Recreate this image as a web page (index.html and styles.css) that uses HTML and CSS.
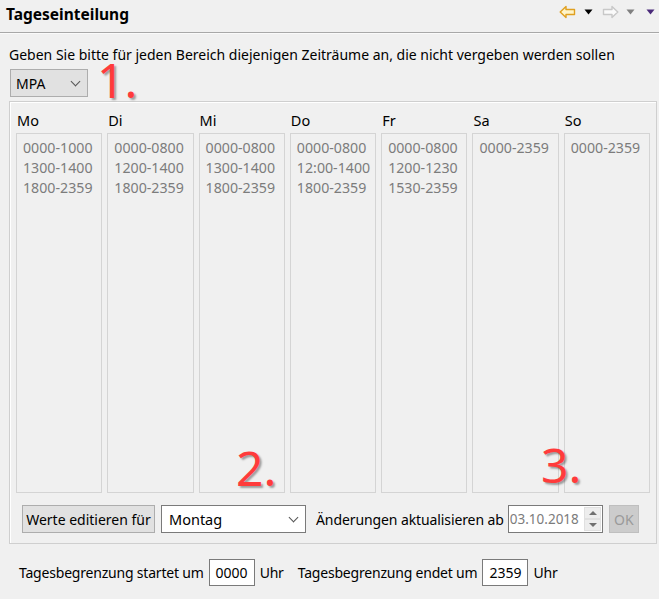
FILE: index.html
```html
<!DOCTYPE html>
<html>
<head>
<meta charset="utf-8">
<link rel="stylesheet" href="styles.css">
</head>
<body>
<div class="header">
  <div class="title">Tageseinteilung</div>
  <div class="toolbar">
    <svg class="back" width="17" height="14" viewBox="0 0 17 14"><path d="M1.2 7 L7 1.5 L7 4.5 L15.5 4.5 L15.5 9.5 L7 9.5 L7 12.5 Z" fill="#fff4c8" stroke="#e0a020" stroke-width="1.4" stroke-linejoin="round"/></svg>
    <svg class="tri t1" width="9" height="6" viewBox="0 0 9 6"><path d="M0.5 0.5 L8.5 0.5 L4.5 5.5 Z" fill="#000"/></svg>
    <svg class="fwd" width="17" height="14" viewBox="0 0 17 14"><path d="M15.8 7 L10 1.5 L10 4.5 L1.5 4.5 L1.5 9.5 L10 9.5 L10 12.5 Z" fill="#fafafa" stroke="#c8c8c8" stroke-width="1.4" stroke-linejoin="round"/></svg>
    <svg class="tri t2" width="9" height="6" viewBox="0 0 9 6"><path d="M0.5 0.5 L8.5 0.5 L4.5 5.5 Z" fill="#808080"/></svg>
    <svg class="tri t3" width="9" height="6" viewBox="0 0 9 6"><path d="M0.5 0.5 L8.5 0.5 L4.5 5.5 Z" fill="#4a2a7a"/></svg>
  </div>
</div>
<div class="content">
  <div class="intro">Geben Sie bitte für jeden Bereich diejenigen Zeiträume an, die nicht vergeben werden sollen</div>
  <div class="combo-row">
    <div class="combo gray">MPA<span class="chev"></span></div>
  </div>
  <div class="group">
    <div class="days">
      <div class="day"><div class="label">Mo</div><div class="list"><div>0000-1000</div><div>1300-1400</div><div>1800-2359</div></div></div>
      <div class="day"><div class="label">Di</div><div class="list"><div>0000-0800</div><div>1200-1400</div><div>1800-2359</div></div></div>
      <div class="day"><div class="label">Mi</div><div class="list"><div>0000-0800</div><div>1300-1400</div><div>1800-2359</div></div></div>
      <div class="day"><div class="label">Do</div><div class="list"><div>0000-0800</div><div>12:00-1400</div><div>1800-2359</div></div></div>
      <div class="day"><div class="label">Fr</div><div class="list"><div>0000-0800</div><div>1200-1230</div><div>1530-2359</div></div></div>
      <div class="day"><div class="label">Sa</div><div class="list"><div>0000-2359</div></div></div>
      <div class="day"><div class="label">So</div><div class="list"><div>0000-2359</div></div></div>
    </div>
    <div class="edit-row">
      <div class="btn">Werte editieren für</div>
      <div class="combo white">Montag<span class="chev"></span></div>
      <div class="lbl">Änderungen aktualisieren ab</div>
      <div class="date"><span class="dval">03.10.2018</span><div class="spin"><div class="sp up"></div><div class="sp down"></div></div></div>
      <div class="ok">OK</div>
    </div>
  </div>
  <div class="limits">
    <span class="lbl">Tagesbegrenzung startet um</span>
    <span class="field">0000</span>
    <span class="lbl uhr">Uhr</span>
    <span class="lbl">Tagesbegrenzung endet um</span>
    <span class="field">2359</span>
    <span class="lbl">Uhr</span>
  </div>
</div>
<div class="mark m1">1.</div>
<div class="mark m2">2.</div>
<div class="mark m3">3.</div>
</body>
</html>
```
FILE: styles.css
```css
html, body {
  margin: 0;
  padding: 0;
  background: #f0f0f0;
  width: 659px;
  height: 599px;
  overflow: hidden;
  font-family: "Noto Sans", "Open Sans", sans-serif;
  font-size: 14px;
  color: #000;
}
body { position: relative; }

.header {
  height: 32px;
  border-bottom: 1px solid #a8a8a8;
  display: flex;
  align-items: center;
  justify-content: space-between;
  padding: 0 4px 0 6px;
  box-shadow: 0 1px 0 #fafafa;
}
.title {
  font-weight: bold;
  font-size: 15.5px;
  margin-top: -4px;
}
.toolbar {
  display: flex;
  align-items: center;
  margin-top: -9px;
}
.toolbar .t1 { margin-left: 8px; }
.toolbar .fwd { margin-left: 9px; }
.toolbar .t2 { margin-left: 7px; }
.toolbar .t3 { margin-left: 11px; }

.content {
  padding: 0 2px 0 9px;
}
.intro {
  margin-top: 12px;
  line-height: 20px;
  height: 20px;
}
.combo-row { margin-top: 4px; }

.combo {
  box-sizing: border-box;
  height: 28px;
  display: flex;
  align-items: center;
  justify-content: space-between;
  padding: 0 8px 0 5px;
  position: relative;
}
.combo.gray {
  width: 78px;
  margin-left: 1px;
  background: #e1e1e1;
  border: 1px solid #adadad;
}
.combo.white {
  width: 145px;
  height: 28px;
  background: #fff;
  border: 1px solid #7a7a7a;
  padding-left: 7px;
  font-size: 14.5px;
}
.chev {
  width: 6px;
  height: 6px;
  border-right: 1px solid #555;
  border-bottom: 1px solid #555;
  transform: rotate(45deg);
  margin-top: -4px;
}

.group {
  box-sizing: border-box;
  margin-top: 4px;
  width: 648px;
  height: 443px;
  border: 1px solid #cfcfcf;
  box-shadow: inset 1px 1px 0 #fff;
  padding: 7px 6px 0 6px;
}
.days {
  display: grid;
  grid-template-columns: repeat(7, 1fr);
  column-gap: 5px;
}
.label {
  height: 24px;
  line-height: 22px;
  padding-left: 1px;
  font-size: 14.5px;
}
.list {
  box-sizing: border-box;
  height: 360px;
  border: 1px solid #d4d4d4;
  padding: 4px 0 0 6px;
  color: #7c7c7c;
  line-height: 20px;
  font-size: 14.2px;
}
.edit-row {
  display: flex;
  align-items: center;
  margin-top: 12px;
  margin-left: 6px;
  height: 28px;
}
.btn {
  box-sizing: border-box;
  height: 28px;
  width: 133px;
  background: #e1e1e1;
  border: 1px solid #adadad;
  display: flex;
  align-items: center;
  justify-content: center;
  margin-right: 6px;
}
.edit-row .lbl { margin-left: 10px; margin-right: 4px; letter-spacing: -0.1px; }
.date {
  box-sizing: border-box;
  width: 95px;
  height: 28px;
  background: #fff;
  border: 1px solid #7a7a7a;
  display: flex;
  align-items: center;
  padding-left: 1px;
  color: #7c7c7c;
  font-size: 13.5px;
}
.dval { flex: 1; }
.spin {
  width: 17px;
  height: 24px;
  display: flex;
  flex-direction: column;
  margin-right: 1px;
}
.sp {
  flex: 1;
  background: #ededed;
  border: 1px solid #e0e0e0;
  position: relative;
}
.sp::after {
  content: "";
  position: absolute;
  left: 4px;
  border-left: 4px solid transparent;
  border-right: 4px solid transparent;
}
.sp.up::after { top: 3px; border-bottom: 4px solid #707070; }
.sp.down::after { top: 3px; border-top: 4px solid #707070; }
.ok {
  box-sizing: border-box;
  width: 30px;
  height: 28px;
  margin-left: 6px;
  background: #cccccc;
  border: 1px solid #bfbfbf;
  color: #9a9a9a;
  display: flex;
  align-items: center;
  justify-content: center;
}

.limits {
  display: flex;
  align-items: center;
  margin-top: 14px;
  margin-left: 10px;
  height: 28px;
}
.limits .lbl { letter-spacing: -0.2px; }
.field {
  box-sizing: border-box;
  width: 46px;
  height: 27px;
  background: #fff;
  border: 1px solid #7a7a7a;
  display: flex;
  align-items: center;
  justify-content: center;
  margin: 0 5px 0 5px;
}
.limits .uhr { margin-right: 14px; }

.mark {
  position: absolute;
  font-family: "Noto Sans", sans-serif;
  font-size: 48px;
  line-height: 1;
  color: #ff3b3b;
  text-shadow: 2px 2px 2px rgba(0,0,0,0.35);
}
.m1 { left: 97px; top: 56px; }
.m2 { left: 236px; top: 444px; }
.m3 { left: 541px; top: 441px; }
```
